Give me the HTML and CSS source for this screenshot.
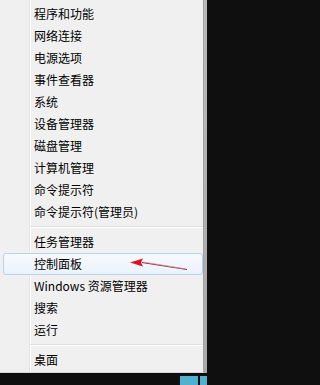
FILE: index.html
```html
<!DOCTYPE html>
<html lang="zh-CN">
<head>
<meta charset="utf-8">
<title>Win+X 菜单</title>
<link rel="stylesheet" href="styles.css">
</head>
<body>
<div class="screen">
  <div class="row">
    <div class="menu">
      <div class="item">程序和功能</div>
      <div class="item">网络连接</div>
      <div class="item">电源选项</div>
      <div class="item">事件查看器</div>
      <div class="item">系统</div>
      <div class="item">设备管理器</div>
      <div class="item">磁盘管理</div>
      <div class="item">计算机管理</div>
      <div class="item">命令提示符</div>
      <div class="item">命令提示符(管理员)</div>
      <div class="sep"></div>
      <div class="item">任务管理器</div>
      <div class="item hot">控制面板
        <svg class="arrow" width="60" height="14" viewBox="0 0 60 14">
          <path d="M12 5.5 L57 12.5" stroke="#8c2433" stroke-width="1.2" fill="none"/>
          <path d="M13 5 L56 12" stroke="#d98a99" stroke-width="0.8" fill="none"/>
          <path d="M0 5.5 L13 1.5 L11 5.5 L13 9.5 Z" fill="#e01020"/>
        </svg>
      </div>
      <div class="item">Windows 资源管理器</div>
      <div class="item">搜索</div>
      <div class="item">运行</div>
      <div class="sep"></div>
      <div class="item">桌面</div>
    </div>
    <div class="shadow"></div>
  </div>
  <div class="taskbar">
    <div class="tile wide"></div>
    <div class="tile"></div>
  </div>
</div>
</body>
</html>
```
FILE: styles.css
```css
html, body {
  margin: 0;
  padding: 0;
  background: #0f0f10;
}
.screen {
  width: 207px;
  height: 385px;
  display: flex;
  flex-direction: column;
  overflow: hidden;
}
.row {
  display: flex;
  height: 373px;
}
.menu {
  width: 203px;
  border-right: 1px solid #a3a3a3;
  border-bottom: 1px solid #d8d8d8;
  box-sizing: content-box;
  padding-top: 3px;
  background: linear-gradient(to right, #f0f0f0 29px, #e2e3e3 29px 30px, #ffffff 30px 31px, #f0f0f0 31px);
  font-family: "Noto Sans CJK SC", "Noto Sans", sans-serif;
  font-size: 12px;
  color: #000;
}
.item {
  height: 22px;
  line-height: 22px;
  padding-left: 34px;
  white-space: nowrap;
}
.item.hot {
  position: relative;
  margin: 0 0 0 3px;
  width: 197px;
  height: 20px;
  line-height: 20px;
  padding-left: 30px;
  box-sizing: content-box;
  width: 168px;
  border: 1px solid #b6d3ec;
  border-radius: 3px;
  background: linear-gradient(to bottom, #f7fafd, #eaf2fa);
}
.arrow {
  position: absolute;
  left: 126px;
  top: 3px;
}
.sep {
  height: 8px;
  margin-left: 30px;
  box-sizing: border-box;
  padding-top: 3px;
}
.sep::before {
  content: "";
  display: block;
  height: 1px;
  background: #e0e0e0;
  border-bottom: 1px solid #ffffff;
}
.shadow {
  width: 3px;
  background: linear-gradient(to bottom, #b9b9b9, #a9a9a9);
}
.taskbar {
  flex: 1;
  display: flex;
  justify-content: flex-end;
  align-items: flex-end;
  gap: 2px;
  background: #0f0f10;
}
.tile {
  width: 7px;
  height: 9px;
  background: #4fb3cf;
}
.tile.wide {
  width: 18px;
}
```
